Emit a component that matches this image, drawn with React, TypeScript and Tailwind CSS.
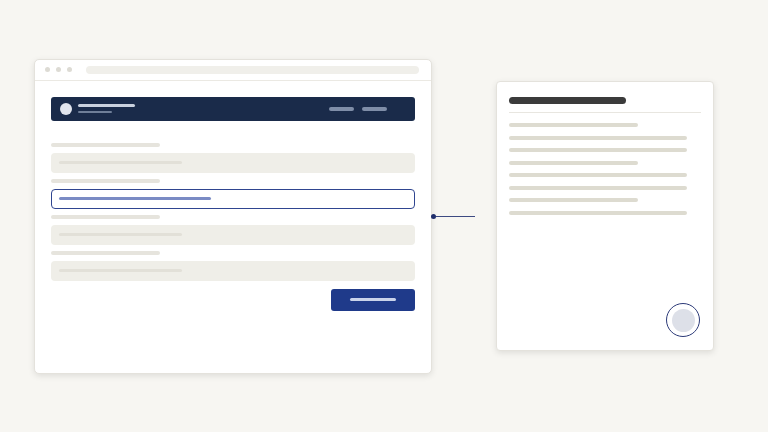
export default function App() {
  const formRows = [
    { focused: false, lineW: "w-[123px]" },
    { focused: true, lineW: "w-[152px]" },
    { focused: false, lineW: "w-[123px]" },
    { focused: false, lineW: "w-[123px]" },
  ];
  const docLines = [false, true, true, false, true, true, false, true];

  return (
    <div className="w-[768px] h-[432px] bg-[#f7f6f2] flex items-center pl-[34px] overflow-hidden">
      {/* Browser window */}
      <div className="w-[398px] h-[315px] bg-white rounded-[5px] border border-[#e4e2dc] shadow-[0_2px_6px_rgba(0,0,0,0.10)] flex flex-col shrink-0">
        <div className="h-[21px] border-b border-[#ebe9e3] flex items-center pl-[10px] pr-[12px] gap-[6px]">
          <span className="w-[5px] h-[5px] rounded-full bg-[#dddbd4]" />
          <span className="w-[5px] h-[5px] rounded-full bg-[#dddbd4]" />
          <span className="w-[5px] h-[5px] rounded-full bg-[#dddbd4]" />
          <div className="ml-[8px] flex-1 h-[8px] rounded-full bg-[#f0efea]" />
        </div>

        <div className="px-[16px] pt-[16px] flex flex-col">
          {/* App header */}
          <div className="h-[24px] rounded-[3px] bg-[#1a2b4a] flex items-center pl-[9px] pr-[28px]">
            <span className="w-[12px] h-[12px] rounded-full bg-[#e1e5ee]" />
            <div className="ml-[6px] flex flex-col gap-[4px]">
              <span className="block w-[57px] h-[3px] rounded-full bg-[#c9d1de]" />
              <span className="block w-[34px] h-[2px] rounded-full bg-[#6f7f99]" />
            </div>
            <div className="ml-auto flex gap-[8px]">
              <span className="w-[25px] h-[4px] rounded-full bg-[#7f8ea8]" />
              <span className="w-[25px] h-[4px] rounded-full bg-[#7f8ea8]" />
            </div>
          </div>

          {/* Form */}
          <div className="mt-[22px] flex flex-col gap-[6px]">
            {formRows.map((row, i) => (
              <div key={i} className="flex flex-col gap-[6px]">
                <span className="block w-[109px] h-[4px] rounded-full bg-[#e6e4dd]" />
                <div
                  className={
                    row.focused
                      ? "h-[20px] rounded-[4px] border-[1.5px] border-[#2f4590] bg-white flex items-center pl-[7px]"
                      : "h-[20px] rounded-[4px] bg-[#efeee8] flex items-center pl-[8px]"
                  }
                >
                  <span
                    className={`block ${row.lineW} h-[3px] rounded-full ${
                      row.focused ? "bg-[#7a8bc4]" : "bg-[#e2e0d8]"
                    }`}
                  />
                </div>
              </div>
            ))}
          </div>

          <div className="mt-[8px] flex justify-end">
            <div className="w-[84px] h-[22px] rounded-[3px] bg-[#1f3a8a] flex items-center justify-center">
              <span className="w-[46px] h-[3px] rounded-full bg-[#c9d3ea]" />
            </div>
          </div>
        </div>
      </div>

      {/* Connector */}
      <div className="w-[44px] flex items-center shrink-0 ml-[-1px]">
        <span className="w-[5px] h-[5px] rounded-full bg-[#1f2d6b] shrink-0" />
        <span className="flex-1 h-px bg-[#3d4a82]" />
      </div>

      {/* Document card */}
      <div className="ml-[21px] w-[218px] h-[270px] bg-white rounded-[4px] border border-[#e4e2dc] shadow-[0_2px_6px_rgba(0,0,0,0.10)] flex flex-col pt-[15px] px-[12px] shrink-0">
        <span className="block w-[117px] h-[7px] rounded-full bg-[#3b3b3b]" />
        <div className="mt-[8px] h-px bg-[#e8e6e0]" />
        <div className="mt-[10px] flex flex-col gap-[8.5px]">
          {docLines.map((long, i) => (
            <span
              key={i}
              className={`block h-[4px] rounded-full bg-[#dddbd0] ${long ? "w-[178px]" : "w-[129px]"}`}
            />
          ))}
        </div>
        <div className="mt-auto mb-[13px] mr-[1px] self-end w-[34px] h-[34px] rounded-full border-[1.5px] border-[#2c3a78] flex items-center justify-center">
          <span className="w-[23px] h-[23px] rounded-full bg-[#dde0e8]" />
        </div>
      </div>
    </div>
  );
}
